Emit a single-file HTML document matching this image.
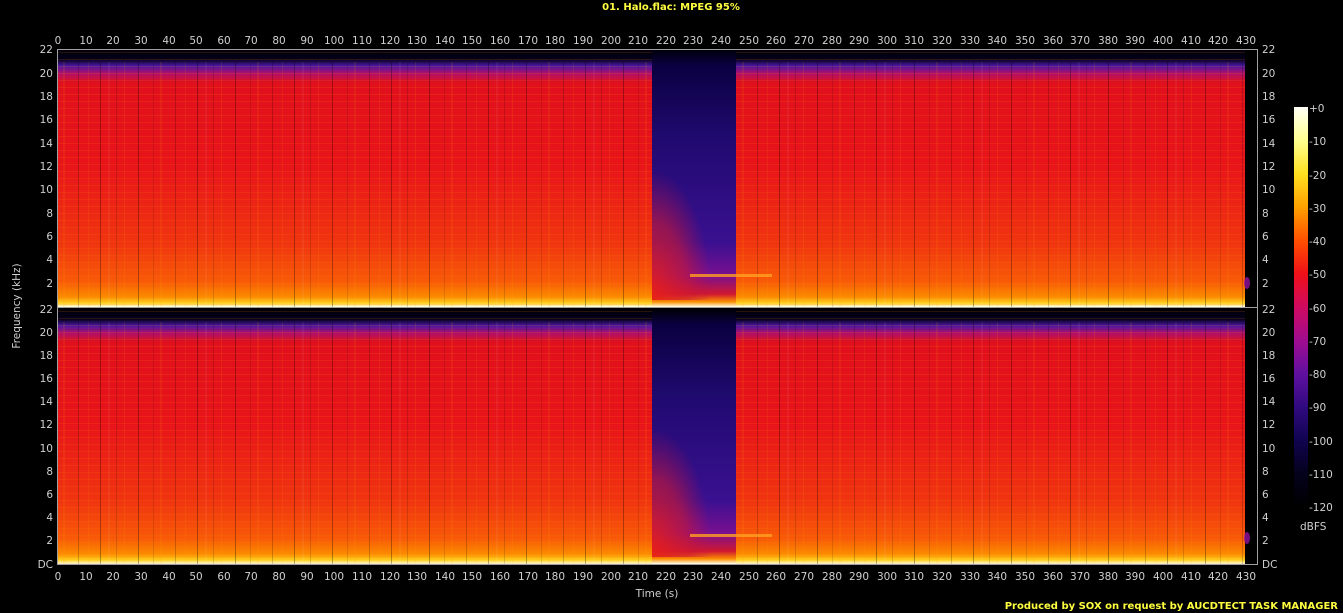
<!DOCTYPE html>
<html><head><meta charset="utf-8"><style>
html,body{margin:0;padding:0;background:#000;width:1343px;height:613px;overflow:hidden}
svg{display:block}
text{font-family:"DejaVu Sans","Liberation Sans",sans-serif;font-size:10.5px;fill:#d0d0d0}
</style></head><body>
<svg width="1343" height="613" viewBox="0 0 1343 613" xmlns="http://www.w3.org/2000/svg">
<defs>
<linearGradient id="sp" x1="0" y1="0" x2="0" y2="1">
<stop offset="0" stop-color="#000008"/>
<stop offset="0.04" stop-color="#05001a"/>
<stop offset="0.065" stop-color="#4a18a0"/>
<stop offset="0.095" stop-color="#b0106a"/>
<stop offset="0.13" stop-color="#e0101c"/>
<stop offset="0.45" stop-color="#e8141a"/>
<stop offset="0.75" stop-color="#f03410"/>
<stop offset="0.9" stop-color="#f85a08"/>
<stop offset="0.96" stop-color="#fb8a00"/>
<stop offset="0.985" stop-color="#ffd020"/>
<stop offset="1" stop-color="#fffff0"/>
</linearGradient>
<linearGradient id="gap" x1="0" y1="0" x2="0" y2="1">
<stop offset="0" stop-color="#000008"/>
<stop offset="0.06" stop-color="#0a0040"/>
<stop offset="0.35" stop-color="#200a70"/>
<stop offset="0.75" stop-color="#3a1090"/>
<stop offset="0.88" stop-color="#7a1090"/>
<stop offset="0.95" stop-color="#d01830"/>
<stop offset="0.98" stop-color="#fb9000"/>
<stop offset="1" stop-color="#fffff0"/>
</linearGradient>
<radialGradient id="ramp" cx="0" cy="1" r="1">
<stop offset="0" stop-color="#e82018" stop-opacity="0.95"/>
<stop offset="0.6" stop-color="#d01830" stop-opacity="0.6"/>
<stop offset="1" stop-color="#c01040" stop-opacity="0"/>
</radialGradient>
<linearGradient id="cb" x1="0" y1="0" x2="0" y2="1">
<stop offset="0" stop-color="#fffff8"/>
<stop offset="0.083" stop-color="#ffff90"/>
<stop offset="0.167" stop-color="#ffe020"/>
<stop offset="0.25" stop-color="#ffa000"/>
<stop offset="0.333" stop-color="#ff5000"/>
<stop offset="0.417" stop-color="#f01018"/>
<stop offset="0.5" stop-color="#d00a60"/>
<stop offset="0.583" stop-color="#a00c90"/>
<stop offset="0.667" stop-color="#6010a0"/>
<stop offset="0.75" stop-color="#300a80"/>
<stop offset="0.833" stop-color="#100450"/>
<stop offset="0.917" stop-color="#04011c"/>
<stop offset="1" stop-color="#000000"/>
</linearGradient>
<pattern id="str" width="97" height="10" patternUnits="userSpaceOnUse">
<rect x="3" y="0" width="1" height="10" fill="#000" opacity="0.3"/>
<rect x="11" y="0" width="2" height="10" fill="#fff" opacity="0.05"/>
<rect x="19" y="0" width="1" height="10" fill="#000" opacity="0.15"/>
<rect x="27" y="0" width="1" height="10" fill="#fa0" opacity="0.12"/>
<rect x="41" y="0" width="1" height="10" fill="#000" opacity="0.3"/>
<rect x="56" y="0" width="1" height="10" fill="#000" opacity="0.12"/>
<rect x="63" y="0" width="2" height="10" fill="#fa0" opacity="0.1"/>
<rect x="78" y="0" width="1" height="10" fill="#000" opacity="0.2"/>
<rect x="88" y="0" width="1" height="10" fill="#fa0" opacity="0.1"/>
</pattern>
<pattern id="hz" width="10" height="7" patternUnits="userSpaceOnUse">
<rect x="0" y="3" width="10" height="1" fill="#ff8000" opacity="0.15"/>
</pattern>
</defs>
<text x="671" y="10" text-anchor="middle" style="fill:#ffff40;font-weight:bold;font-size:10px">01. Halo.flac: MPEG 95%</text>

<g>
<rect x="58" y="49" width="1200" height="258" fill="#000"/>
<rect x="58" y="49" width="1187" height="258" fill="url(#sp)"/>
<rect x="58" y="49" width="1187" height="258" fill="url(#hz)"/>
<rect x="58" y="62" width="1187" height="245" fill="url(#str)"/>
<rect x="652" y="49" width="84" height="258" fill="url(#gap)"/>
<rect x="652" y="170" width="60" height="130" fill="url(#ramp)"/>
<rect x="690" y="274" width="82" height="3" fill="#ffa020" opacity="0.8"/>
<ellipse cx="1247" cy="283" rx="3" ry="6" fill="#9010a0" opacity="0.8"/>
</g>
<g>
<rect x="58" y="309" width="1200" height="255" fill="#000"/>
<rect x="58" y="309" width="1187" height="255" fill="url(#sp)"/>
<rect x="58" y="309" width="1187" height="255" fill="url(#hz)"/>
<rect x="58" y="322" width="1187" height="242" fill="url(#str)"/>
<rect x="652" y="309" width="84" height="255" fill="url(#gap)"/>
<rect x="652" y="428" width="60" height="129" fill="url(#ramp)"/>
<rect x="690" y="534" width="82" height="3" fill="#ffa020" opacity="0.8"/>
<ellipse cx="1247" cy="538" rx="3" ry="6" fill="#9010a0" opacity="0.8"/>
</g>
<g stroke="#a0a0a0" stroke-width="1" fill="none">
<path d="M57.5 49.5H1257.5V564.5H57.5Z"/>
<path d="M57.5 307.5H1257.5"/>
</g>

<g text-anchor="middle">
<text x="58" y="44">0</text><text x="86" y="44">10</text><text x="113" y="44">20</text><text x="141" y="44">30</text><text x="169" y="44">40</text><text x="196" y="44">50</text><text x="224" y="44">60</text><text x="251" y="44">70</text><text x="279" y="44">80</text><text x="307" y="44">90</text><text x="334" y="44">100</text><text x="362" y="44">110</text><text x="390" y="44">120</text><text x="417" y="44">130</text><text x="445" y="44">140</text><text x="472" y="44">150</text><text x="500" y="44">160</text><text x="528" y="44">170</text><text x="555" y="44">180</text><text x="583" y="44">190</text><text x="611" y="44">200</text><text x="638" y="44">210</text><text x="666" y="44">220</text><text x="693" y="44">230</text><text x="721" y="44">240</text><text x="749" y="44">250</text><text x="776" y="44">260</text><text x="804" y="44">270</text><text x="832" y="44">280</text><text x="859" y="44">290</text><text x="887" y="44">300</text><text x="914" y="44">310</text><text x="942" y="44">320</text><text x="970" y="44">330</text><text x="997" y="44">340</text><text x="1025" y="44">350</text><text x="1053" y="44">360</text><text x="1080" y="44">370</text><text x="1108" y="44">380</text><text x="1135" y="44">390</text><text x="1163" y="44">400</text><text x="1191" y="44">410</text><text x="1218" y="44">420</text><text x="1246" y="44">430</text>
</g>
<g text-anchor="middle">
<text x="58" y="580">0</text><text x="86" y="580">10</text><text x="113" y="580">20</text><text x="141" y="580">30</text><text x="169" y="580">40</text><text x="196" y="580">50</text><text x="224" y="580">60</text><text x="251" y="580">70</text><text x="279" y="580">80</text><text x="307" y="580">90</text><text x="334" y="580">100</text><text x="362" y="580">110</text><text x="390" y="580">120</text><text x="417" y="580">130</text><text x="445" y="580">140</text><text x="472" y="580">150</text><text x="500" y="580">160</text><text x="528" y="580">170</text><text x="555" y="580">180</text><text x="583" y="580">190</text><text x="611" y="580">200</text><text x="638" y="580">210</text><text x="666" y="580">220</text><text x="693" y="580">230</text><text x="721" y="580">240</text><text x="749" y="580">250</text><text x="776" y="580">260</text><text x="804" y="580">270</text><text x="832" y="580">280</text><text x="859" y="580">290</text><text x="887" y="580">300</text><text x="914" y="580">310</text><text x="942" y="580">320</text><text x="970" y="580">330</text><text x="997" y="580">340</text><text x="1025" y="580">350</text><text x="1053" y="580">360</text><text x="1080" y="580">370</text><text x="1108" y="580">380</text><text x="1135" y="580">390</text><text x="1163" y="580">400</text><text x="1191" y="580">410</text><text x="1218" y="580">420</text><text x="1246" y="580">430</text>
</g>
<text x="657" y="597" text-anchor="middle">Time (s)</text>
<text transform="translate(20,306) rotate(-90)" text-anchor="middle">Frequency (kHz)</text>

<g text-anchor="end">
<text x="53" y="53">22</text><text x="53" y="77">20</text><text x="53" y="100">18</text><text x="53" y="123">16</text><text x="53" y="147">14</text><text x="53" y="170">12</text><text x="53" y="193">10</text><text x="53" y="217">8</text><text x="53" y="240">6</text><text x="53" y="263">4</text><text x="53" y="287">2</text>
<text x="53" y="313">22</text><text x="53" y="336">20</text><text x="53" y="359">18</text><text x="53" y="382">16</text><text x="53" y="405">14</text><text x="53" y="428">12</text><text x="53" y="452">10</text><text x="53" y="475">8</text><text x="53" y="498">6</text><text x="53" y="521">4</text><text x="53" y="544">2</text><text x="53" y="568">DC</text>
</g>
<g text-anchor="start">
<text x="1262" y="53">22</text><text x="1262" y="77">20</text><text x="1262" y="100">18</text><text x="1262" y="123">16</text><text x="1262" y="147">14</text><text x="1262" y="170">12</text><text x="1262" y="193">10</text><text x="1262" y="217">8</text><text x="1262" y="240">6</text><text x="1262" y="263">4</text><text x="1262" y="287">2</text>
<text x="1262" y="313">22</text><text x="1262" y="336">20</text><text x="1262" y="359">18</text><text x="1262" y="382">16</text><text x="1262" y="405">14</text><text x="1262" y="428">12</text><text x="1262" y="452">10</text><text x="1262" y="475">8</text><text x="1262" y="498">6</text><text x="1262" y="521">4</text><text x="1262" y="544">2</text><text x="1262" y="568">DC</text>
</g>

<rect x="1294" y="107" width="14" height="400" fill="url(#cb)"/>
<g text-anchor="start">
<text x="1309" y="112">+0</text><text x="1309" y="145">-10</text><text x="1309" y="179">-20</text><text x="1309" y="212">-30</text><text x="1309" y="245">-40</text><text x="1309" y="278">-50</text><text x="1309" y="312">-60</text><text x="1309" y="345">-70</text><text x="1309" y="378">-80</text><text x="1309" y="411">-90</text><text x="1309" y="445">-100</text><text x="1309" y="478">-110</text><text x="1309" y="511">-120</text>
</g>
<text x="1300" y="530">dBFS</text>
<text x="1338" y="609" text-anchor="end" style="fill:#ffff40;font-weight:bold;font-size:10px">Produced by SOX on request by AUCDTECT TASK MANAGER</text>
</svg>
</body></html>
